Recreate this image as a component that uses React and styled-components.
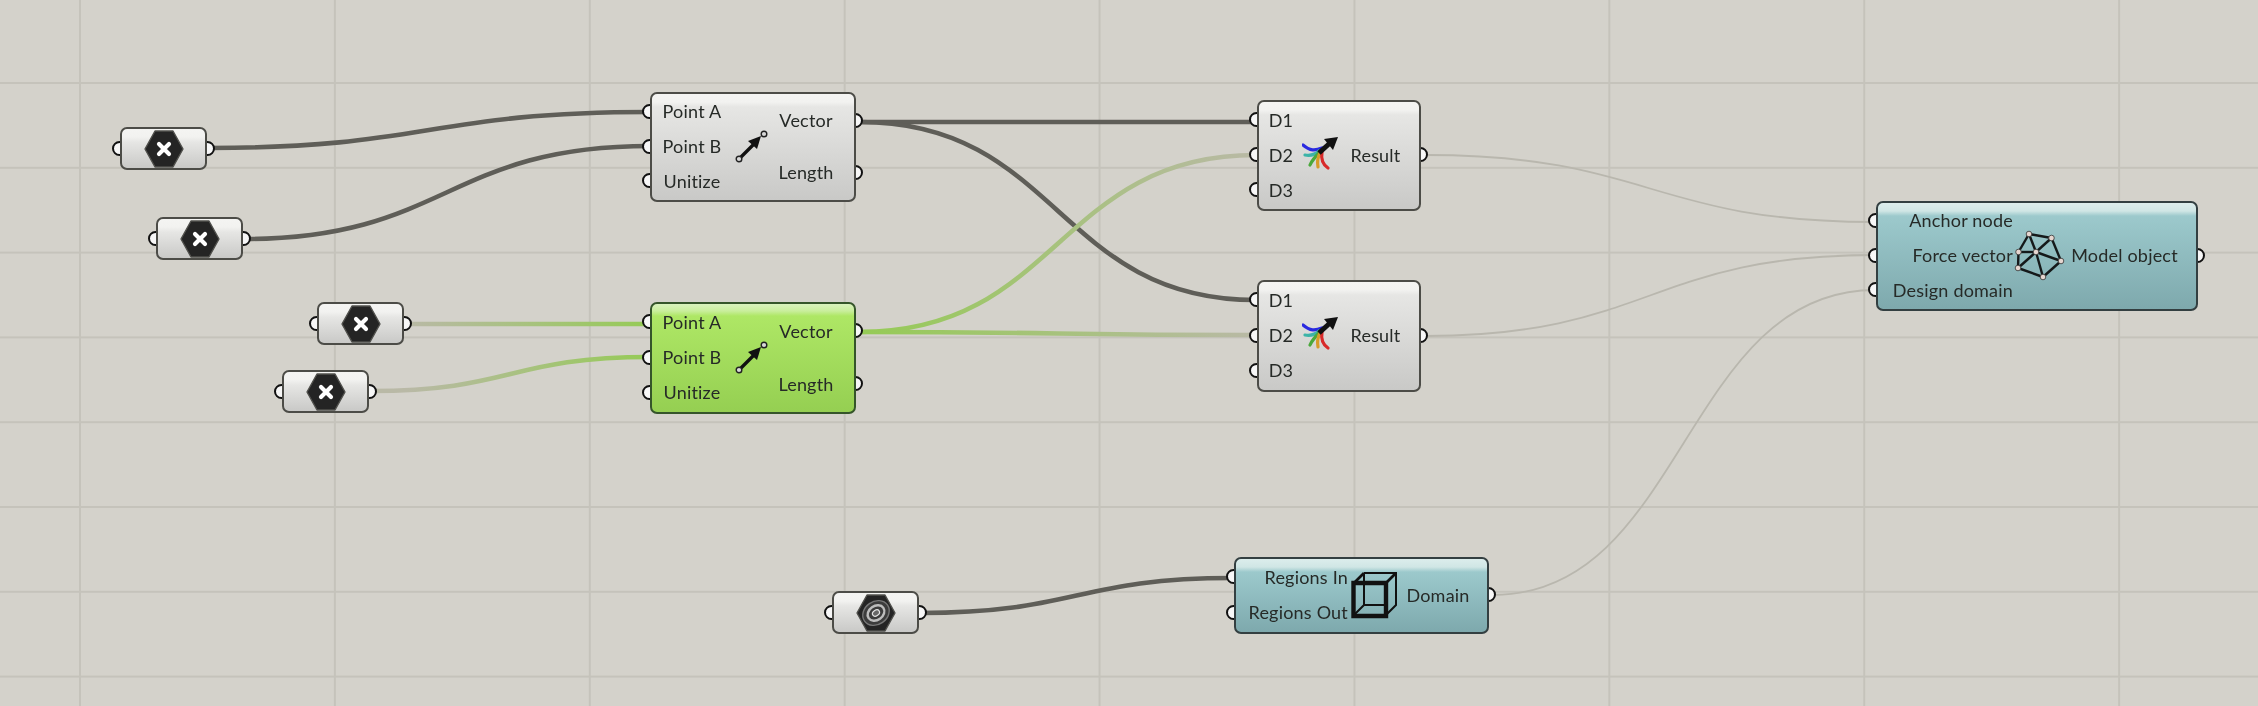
import React from 'react';
import styled, { createGlobalStyle, css } from 'styled-components';

const GlobalStyle = createGlobalStyle`
    html, body {
        margin: 0;
        padding: 0;
        background: #d4d2cb;
    }
`

const skins = {
    grey: css`
        border-color: #4c4c47;
        background: linear-gradient(#f4f4f2 0, #f2f2f0 8px, #e6e6e4 13px, #c9c9c7 100%);
    `,
    green: css`
        border-color: #35552a;
        background: linear-gradient(#d9f2bd 0, #c9ee9c 7px, #aee765 12px, #95cf52 100%);
    `,
    teal: css`
        border-color: #333f41;
        background: linear-gradient(#dcedec 0, #d0e6e5 8px, #9cc9cc 13px, #7ea9ad 100%);
    `,
}

const wire = (x1, y1, x2, y2) => {
    const mid = (x1 + x2) / 2
    return `M${x1} ${y1} C${mid} ${y1} ${mid} ${y2} ${x2} ${y2}`
}

const Wires = () => (
    <WireLayer viewBox="0 0 2258 706">
        <defs>
            <linearGradient id="fadeIn" gradientUnits="userSpaceOnUse" x1="407" y1="0" x2="652" y2="0">
                <stop offset="0" stopColor="#b9b9a6" />
                <stop offset="1" stopColor="#95cb55" />
            </linearGradient>
            <linearGradient id="fadeOut" gradientUnits="userSpaceOnUse" x1="860" y1="0" x2="1258" y2="0">
                <stop offset="0" stopColor="#95cb55" />
                <stop offset="1" stopColor="#b9b9a6" />
            </linearGradient>
        </defs>
        <g fill="none" stroke="#5f5e58" strokeWidth="4.6">
            <path d={wire(208, 148, 650, 112)} />
            <path d={wire(243, 239, 650, 146)} />
            <path d={wire(860, 122, 1256, 122)} />
            <path d={wire(860, 122, 1256, 300)} />
            <path d={wire(920, 613, 1233, 578)} />
        </g>
        <g fill="none" stroke="url(#fadeIn)" strokeWidth="4.6">
            <path d={wire(405, 324, 650, 324.01)} />
            <path d={wire(371, 391, 650, 357)} />
        </g>
        <g fill="none" stroke="url(#fadeOut)" strokeWidth="4.6">
            <path d={wire(860, 332, 1256, 155)} />
            <path d={wire(860, 332, 1256, 335)} />
        </g>
        <g fill="none" stroke="#b9b7ae" strokeWidth="1.8">
            <path d={wire(1425, 155, 1875, 222)} />
            <path d={wire(1425, 336, 1875, 255)} />
            <path d={wire(1493, 595, 1875, 290)} />
        </g>
    </WireLayer>
)

const VectorIcon = () => (
    <Icon width="34" height="34" viewBox="0 0 34 34">
        <path d="M5 29 L20 14" stroke="#111" strokeWidth="3.4" fill="none" />
        <path d="M13 12 L26 7 L22 20 Z" fill="#111" />
        <circle cx="4" cy="30" r="2.8" fill="#d8d8d8" stroke="#222" strokeWidth="1.4" />
        <circle cx="29" cy="5" r="2.8" fill="#d8d8d8" stroke="#222" strokeWidth="1.4" />
    </Icon>
)

const MergeIcon = () => (
    <Icon width="38" height="38" viewBox="0 0 38 38">
        <g fill="none" strokeWidth="3.2" strokeLinecap="round">
            <path d="M1 9 C8 15 13 15 20 12" stroke="#2a2ae0" />
            <path d="M3 19 C9 20 14 18 17 15" stroke="#3cb4a8" />
            <path d="M8 29 C10 24 14 20 18 16" stroke="#4aa83c" />
            <path d="M16 31 C15 26 16 21 18 17" stroke="#d89a2a" />
            <path d="M26 32 C20 28 19 22 20 16" stroke="#d82a2a" />
        </g>
        <path d="M17 17 L28 7" stroke="#111" strokeWidth="5" fill="none" />
        <path d="M22 3 L36 1 L31 14 Z" fill="#111" />
    </Icon>
)

const modelPoints = [[15, 6], [37.5, 10], [47, 33], [29, 49], [4, 40], [4.5, 24], [22, 24]]
const modelEdges = [[0, 1], [1, 2], [2, 3], [3, 4], [4, 5], [5, 0], [6, 0], [6, 1], [6, 2], [6, 3], [6, 4], [6, 5]]

const ModelIcon = () => (
    <Icon width="51" height="54" viewBox="0 0 51 54">
        {modelEdges.map(([a, b]) => (
            <line
                key={`${a}-${b}`}
                x1={modelPoints[a][0]}
                y1={modelPoints[a][1]}
                x2={modelPoints[b][0]}
                y2={modelPoints[b][1]}
                stroke="#15191a"
                strokeWidth="2.4"
            />
        ))}
        {modelPoints.map(([x, y]) => (
            <circle key={`${x}-${y}`} cx={x} cy={y} r="2.8" fill="#e6d6d0" stroke="#333" strokeWidth="0.8" />
        ))}
    </Icon>
)

const CubeIcon = () => (
    <Icon width="48" height="50" viewBox="0 0 48 50">
        <g fill="none" stroke="#111">
            <path d="M13 3 H45 V35 L35 45 M13 3 V35 H35 M13 35 L3 45" strokeWidth="2" />
            <path d="M3 13 L13 3 M35 13 L45 3" strokeWidth="2.8" />
            <path d="M2.5 13 H35 V46 H2.5 Z" strokeWidth="4.4" />
        </g>
    </Icon>
)

const HexShape = ({ children }) => (
    <Icon width="40" height="38" viewBox="0 0 40 38">
        <path d="M11 1 H29 L39 19 L29 37 H11 L1 19 Z" fill="#242424" stroke="#50504c" strokeWidth="1.4" strokeLinejoin="round" />
        {children}
    </Icon>
)

const CrossHex = () => (
    <HexShape>
        <path d="M15 14 L25 24 M25 14 L15 24" stroke="#fff" strokeWidth="4.2" strokeLinecap="round" />
    </HexShape>
)

const RingHex = () => (
    <HexShape>
        <ellipse cx="20" cy="19" rx="14" ry="11.5" fill="#3c3c3c" stroke="#777" strokeWidth="1.4" transform="rotate(-35 20 19)" />
        <ellipse cx="20" cy="19" rx="9" ry="7" fill="none" stroke="#bdbdbd" strokeWidth="2.4" transform="rotate(-35 20 19)" />
        <ellipse cx="20" cy="19" rx="3.8" ry="2.8" fill="#666" stroke="#e4e4e4" strokeWidth="1.2" transform="rotate(-35 20 19)" />
    </HexShape>
)

const Param = ({ x, y, children }) => (
    <Node $x={x} $y={y} $w={87} $h={43} $skin="grey">
        <Port $side="left" $at={50} />
        <HexCell>{children}</HexCell>
        <Port $side="right" $at={50} />
    </Node>
)

const Side = ({ side, labels, align, pad = 0 }) => (
    <Column>
        {labels.map(label => (
            <Row key={label} $align={align} $pad={pad}>
                <Label>{label}</Label>
            </Row>
        ))}
        {labels.map((label, i) => (
            <Port key={label} $side={side} $at={((i + 0.5) * 100) / labels.length} />
        ))}
    </Column>
)

const Component = ({ x, y, w, h, skin, cols, inputs, outputs, inAlign, outPad, children }) => (
    <Node $x={x} $y={y} $w={w} $h={h} $skin={skin}>
        <NodeGrid $cols={cols}>
            <Side side="left" labels={inputs} align={inAlign} />
            <IconCell>{children}</IconCell>
            <Side side="right" labels={outputs} align="center" pad={outPad} />
        </NodeGrid>
    </Node>
)

const App = () => {
    return (
        <>
            <GlobalStyle />
            <Canvas>
                <Wires />

                <Param x={120} y={127}><CrossHex /></Param>
                <Param x={156} y={217}><CrossHex /></Param>
                <Param x={317} y={302}><CrossHex /></Param>
                <Param x={282} y={370}><CrossHex /></Param>
                <Param x={832} y={591}><RingHex /></Param>

                <Component x={650} y={92} w={206} h={110} skin="grey" cols="80px 40px 81px" outPad={13}
                    inputs={['Point A', 'Point B', 'Unitize']} outputs={['Vector', 'Length']} inAlign="center">
                    <VectorIcon />
                </Component>
                <Component x={650} y={302} w={206} h={112} skin="green" cols="80px 40px 81px" outPad={13}
                    inputs={['Point A', 'Point B', 'Unitize']} outputs={['Vector', 'Length']} inAlign="center">
                    <VectorIcon />
                </Component>

                <Component x={1257} y={100} w={164} h={111} skin="grey" cols="44px 36px 79px" outPad={6}
                    inputs={['D1', 'D2', 'D3']} outputs={['Result']} inAlign="center">
                    <MergeIcon />
                </Component>
                <Component x={1257} y={280} w={164} h={112} skin="grey" cols="44px 36px 79px" outPad={6}
                    inputs={['D1', 'D2', 'D3']} outputs={['Result']} inAlign="center">
                    <MergeIcon />
                </Component>

                <Component x={1876} y={201} w={322} h={110} skin="teal" cols="135px 52px 130px" outPad={11}
                    inputs={['Anchor node', 'Force vector', 'Design domain']} outputs={['Model object']} inAlign="end">
                    <ModelIcon />
                </Component>

                <Component x={1234} y={557} w={255} h={77} skin="teal" cols="112px 54px 84px" outPad={12}
                    inputs={['Regions In', 'Regions Out']} outputs={['Domain']} inAlign="end">
                    <CubeIcon />
                </Component>
            </Canvas>
        </>
    )
}

export default App;

const Canvas = styled.div`
    position: relative;
    width: 2258px;
    height: 706px;
    overflow: hidden;
    isolation: isolate;
    background-color: #d4d2cb;
    background-image:
        linear-gradient(to right, #c5c3bb 2px, transparent 2px),
        linear-gradient(to bottom, #c5c3bb 2px, transparent 2px);
    background-size: 254.9px 84.8px;
    background-position: 79px 82px;
    filter: blur(0.7px);
`

const WireLayer = styled.svg`
    position: absolute;
    inset: 0;
    width: 2258px;
    height: 706px;
    z-index: -2;
`

const Node = styled.div`
    position: absolute;
    left: ${p => p.$x}px;
    top: ${p => p.$y}px;
    width: ${p => p.$w}px;
    height: ${p => p.$h}px;
    box-sizing: border-box;
    border: 2.5px solid;
    border-radius: 7px;
    display: flex;
    ${p => skins[p.$skin]}
`

const NodeGrid = styled.div`
    flex: 1;
    display: grid;
    grid-template-columns: ${p => p.$cols};
    padding: 0 0 2px;
    font-family: "Lato", "Liberation Sans", sans-serif;
    font-size: 18px;
    color: #262a27;
`

const Column = styled.div`
    position: relative;
    display: flex;
    flex-direction: column;
`

const Row = styled.div`
    flex: 1;
    display: flex;
    align-items: center;
    justify-content: ${p => p.$align};
    padding-right: ${p => p.$pad}px;
`

const Label = styled.span`
    white-space: nowrap;
    letter-spacing: 0.2px;
`

const IconCell = styled.div`
    display: flex;
    align-items: center;
    justify-content: center;
`

const HexCell = styled(IconCell)`
    flex: 1;
`

const Icon = styled.svg`
    display: block;
    flex: none;
`

const Port = styled.i`
    position: absolute;
    top: ${p => p.$at}%;
    ${p => (p.$side === 'left' ? 'left: -10px;' : 'right: -10px;')}
    width: 11px;
    height: 11px;
    margin-top: -7.5px;
    box-sizing: content-box;
    border: 2.5px solid #111;
    border-radius: 50%;
    background: #f7f7f7;
    z-index: -1;
`
